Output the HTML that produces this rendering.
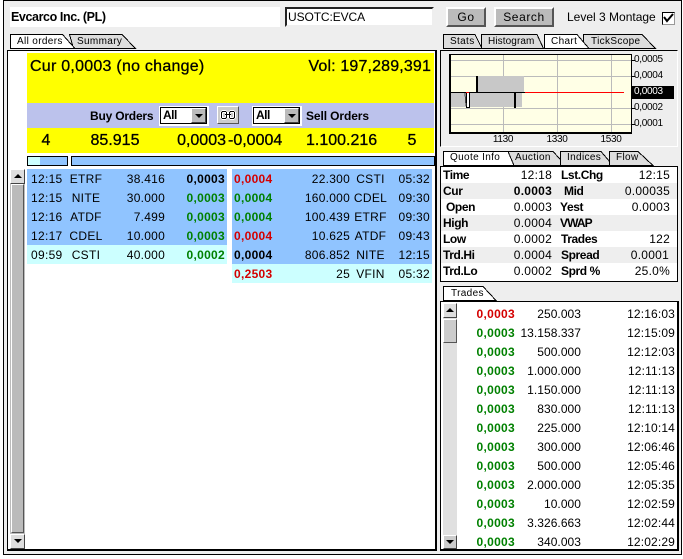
<!DOCTYPE html>
<html><head><meta charset="utf-8"><style>
html,body{margin:0;padding:0;background:#fff}
#r{position:relative;width:683px;height:559px;overflow:hidden;background:#fff;font:12px/16px "Liberation Sans",sans-serif;color:#000}
#r div,#r span{position:absolute;white-space:nowrap}
.b{font-weight:bold}.g{color:#008000}.d{color:#d40000}
.t{letter-spacing:.3px}
.rt{text-align:right}.c{text-align:center}
.btn{background:#bbb;border:2px solid;border-color:#fff #555 #555 #fff;box-sizing:border-box;text-align:center;font-size:12px;letter-spacing:.6px}
.tab{font-size:10px;letter-spacing:.35px;line-height:14px}
.up{background:#ddd;border:1px solid;border-color:#fff #444 #444 #fff;box-sizing:border-box}
.sel{background:#fff;box-sizing:border-box;border:1px solid #fff}
.q{font-weight:bold;font-size:12px;letter-spacing:-.4px}
.v{text-align:right;letter-spacing:.25px}
.vt{text-align:right;letter-spacing:.05px}
.tm{text-align:right;letter-spacing:.15px}
.lb{font-size:10px;letter-spacing:-.3px}
.big{font-size:16px;line-height:20px;-webkit-text-stroke:.3px #000}
</style></head><body><div id="r">
<div style="left:3px;top:0;width:679px;height:555px;box-sizing:border-box;border:1px solid #000;background:#eee"></div>

<div style="left:10px;top:7px;width:270px;height:20px;background:#fff"></div>
<div class="b" style="left:11px;top:9px;font-size:12.500px;letter-spacing:-.4px">Evcarco Inc. (PL)</div>
<div style="left:285px;top:7px;width:149px;height:20px;box-sizing:border-box;background:#fff;border:2px solid;border-color:#222 #eee #eee #222"></div>
<div style="left:288px;top:9px;letter-spacing:-.1px">USOTC:EVCA</div>
<div class="btn" style="left:446px;top:7px;width:40px;height:20px;line-height:16px">Go</div>
<div class="btn" style="left:494px;top:7px;width:60px;height:20px;line-height:16px">Search</div>
<div style="left:567px;top:9px">Level 3 Montage</div>
<div style="left:662px;top:12px;width:13px;height:13px;box-sizing:border-box;background:#fff;border:1px solid #000;border-right-color:#999;border-bottom-color:#999"></div>

<svg style="position:absolute;left:0;top:0" width="683" height="559">
<g stroke="#000" stroke-width="1" fill="#ddd" shape-rendering="crispEdges">
<path d="M73.500 48.500L69.500 34.500H122L135.500 48.500Z"/>
<path d="M10.500 48.500V34.500H62.500L75 48.500Z" fill="#fff"/>
<path d="M443.500 48.500V34.500H475L482 48.500Z"/>
<path d="M481.500 48.500V34.500H537L543.500 48.500Z"/>
<path d="M583.500 48.500V34.500H642L655.500 48.500Z"/>
<path d="M544.500 48.500V34.500H577L589 48.500Z" fill="#fff"/>
<path d="M508.500 165.500V151.500H553L566 165.500Z"/>
<path d="M560.500 165.500V151.500H601L613 165.500Z"/>
<path d="M609.500 165.500V151.500H638L653 165.500Z"/>
<path d="M443.500 165.500V151.500H508L514 165.500Z" fill="#fff"/>
<path d="M443.500 300.500V286.500H483L496 300.500Z" fill="#fff"/>
</g>
<path d="M664 17l3 4 6-7" fill="none" stroke="#000" stroke-width="2"/>
</svg>
<div class="tab" style="left:17px;top:35px">All orders</div>
<div class="tab" style="left:77px;top:35px">Summary</div>
<div class="tab" style="left:450px;top:35px">Stats</div>
<div class="tab" style="left:488px;top:35px;letter-spacing:.1px">Histogram</div>
<div class="tab" style="left:551px;top:35px">Chart</div>
<div class="tab" style="left:591px;top:35px">TickScope</div>
<div class="tab" style="left:450px;top:151px">Quote Info</div>
<div class="tab" style="left:515px;top:151px">Auction</div>
<div class="tab" style="left:567px;top:151px">Indices</div>
<div class="tab" style="left:616px;top:151px">Flow</div>
<div class="tab" style="left:451px;top:287px">Trades</div>

<!-- main panel -->
<div style="left:7px;top:50px;width:430px;height:501px;box-sizing:border-box;border:1px solid #000;background:#fff;border-width:1px 2px 2px 1px"></div>
<div style="left:27px;top:53px;width:407px;height:50px;background:#ff0"></div>
<div style="left:27px;top:103px;width:407px;height:25px;background:#bcc2ec"></div>
<div style="left:27px;top:128px;width:407px;height:25px;background:#ff0"></div>
<div class="big" style="left:30px;top:57px;letter-spacing:.25px">Cur 0,0003 (no change)</div>
<div class="rt big" style="left:231px;width:200px;top:57px;letter-spacing:.15px">Vol: 197,289,391</div>
<div class="b" style="left:90px;top:108px;letter-spacing:-.2px">Buy Orders</div>
<div class="b" style="left:306px;top:108px;letter-spacing:-.1px">Sell Orders</div>
<div style="left:159px;top:106px;width:50px;height:20px;background:#fff"></div>
<div style="left:160px;top:107px;width:47px;height:17px;border:1px solid #000;box-sizing:border-box;background:#fff"></div>
<div class="b" style="left:163px;top:108px;line-height:15px;letter-spacing:-.5px">All</div>
<div style="left:191px;top:108px;width:15px;height:15px;background:#bbb;box-sizing:border-box;border:1px solid;border-color:#fff #444 #444 #fff"></div>
<div style="left:195px;top:114px;width:0;height:0;border:4px solid transparent;border-top:4px solid #000;border-bottom:0"></div>
<div style="left:252px;top:106px;width:50px;height:20px;background:#fff"></div>
<div style="left:253px;top:107px;width:47px;height:17px;border:1px solid #000;box-sizing:border-box;background:#fff"></div>
<div class="b" style="left:256px;top:108px;line-height:15px;letter-spacing:-.5px">All</div>
<div style="left:284px;top:108px;width:15px;height:15px;background:#bbb;box-sizing:border-box;border:1px solid;border-color:#fff #444 #444 #fff"></div>
<div style="left:288px;top:114px;width:0;height:0;border:4px solid transparent;border-top:4px solid #000;border-bottom:0"></div>
<div style="left:217px;top:106px;width:22px;height:18px;box-sizing:border-box;background:#ccc;border:1px solid;border-color:#fff #555 #555 #fff"></div>
<svg style="position:absolute;left:217px;top:106px" width="22" height="18"><g fill="none" shape-rendering="crispEdges"><g stroke="#fff" stroke-width="3"><rect x="4.500" y="5.500" width="5" height="7" rx="2"/><rect x="12.500" y="5.500" width="5" height="7" rx="2"/></g><g stroke="#000" stroke-width="1"><rect x="4.500" y="5.500" width="5" height="7" rx="1.500"/><rect x="12.500" y="5.500" width="5" height="7" rx="1.500"/><path d="M8 8.500H14"/></g></g></svg>

<div class="c big" style="left:27px;width:38px;top:131px">4</div>
<div class="c big" style="left:90px;width:50px;top:131px">85.915</div>
<div class="rt big" style="left:150px;width:76px;top:131px">0,0003</div>
<div class="big" style="left:228px;top:131px">-0,0004</div>
<div class="big" style="left:306px;top:131px">1.100.216</div>
<div class="c big" style="left:400px;width:24px;top:131px">5</div>

<div style="left:27px;top:156px;width:41px;height:10px;box-sizing:border-box;border:1px solid #000;background:linear-gradient(90deg,#cff 0 12px,#90c4ff 12px)"></div>
<div style="left:71px;top:156px;width:364px;height:10px;box-sizing:border-box;border:1px solid #000;background:#90c4ff"></div>

<!-- main scrollbar -->
<div style="left:10px;top:169px;width:15px;height:380px;background:#bbb"></div>
<div class="up" style="left:10px;top:169px;width:15px;height:15px"></div>
<div style="left:14px;top:174px;width:0;height:0;border:4px solid transparent;border-bottom:4px solid #000;border-top:0"></div>
<div style="left:11px;top:184px;width:13px;height:349px;background:#bbb;box-sizing:border-box;border:1px solid;border-color:#fff #555 #555 #fff"></div>
<div class="up" style="left:10px;top:534px;width:15px;height:15px"></div>
<div style="left:14px;top:539px;width:0;height:0;border:4px solid transparent;border-top:4px solid #000;border-bottom:0"></div>

<!-- order rows -->
<div style="left:27px;top:169px;width:200px;height:76px;background:#90c4ff"></div>
<div style="left:27px;top:245px;width:200px;height:19px;background:#cff"></div>
<div style="left:232px;top:169px;width:200px;height:95px;background:#90c4ff"></div>
<div style="left:232px;top:264px;width:200px;height:19px;background:#cff"></div>

<div class="t" style="left:31px;top:171px">12:15</div><div class="c t" style="left:66px;width:40px;top:171px">ETRF</div><div class="v" style="left:105px;width:60px;top:171px">38.416</div><div class="rt b t" style="left:165px;width:60px;top:171px">0,0003</div>
<div class="t" style="left:31px;top:190px">12:15</div><div class="c t" style="left:66px;width:40px;top:190px">NITE</div><div class="v" style="left:105px;width:60px;top:190px">30.000</div><div class="rt b t g" style="left:165px;width:60px;top:190px">0,0003</div>
<div class="t" style="left:31px;top:209px">12:16</div><div class="c t" style="left:66px;width:40px;top:209px">ATDF</div><div class="v" style="left:105px;width:60px;top:209px">7.499</div><div class="rt b t g" style="left:165px;width:60px;top:209px">0,0003</div>
<div class="t" style="left:31px;top:228px">12:17</div><div class="c t" style="left:66px;width:40px;top:228px">CDEL</div><div class="v" style="left:105px;width:60px;top:228px">10.000</div><div class="rt b t g" style="left:165px;width:60px;top:228px">0,0003</div>
<div class="t" style="left:31px;top:247px">09:59</div><div class="c t" style="left:66px;width:40px;top:247px">CSTI</div><div class="v" style="left:105px;width:60px;top:247px">40.000</div><div class="rt b t g" style="left:165px;width:60px;top:247px">0,0002</div>

<div class="b t d" style="left:234px;top:171px">0,0004</div><div class="v" style="left:280px;width:70px;top:171px">22.300</div><div class="c t" style="left:350px;width:41px;top:171px">CSTI</div><div class="t rt" style="left:390px;width:40px;top:171px">05:32</div>
<div class="b t g" style="left:234px;top:190px">0,0004</div><div class="v" style="left:280px;width:70px;top:190px">160.000</div><div class="c t" style="left:350px;width:41px;top:190px">CDEL</div><div class="t rt" style="left:390px;width:40px;top:190px">09:30</div>
<div class="b t g" style="left:234px;top:209px">0,0004</div><div class="v" style="left:280px;width:70px;top:209px">100.439</div><div class="c t" style="left:350px;width:41px;top:209px">ETRF</div><div class="t rt" style="left:390px;width:40px;top:209px">09:30</div>
<div class="b t d" style="left:234px;top:228px">0,0004</div><div class="v" style="left:280px;width:70px;top:228px">10.625</div><div class="c t" style="left:350px;width:41px;top:228px">ATDF</div><div class="t rt" style="left:390px;width:40px;top:228px">09:43</div>
<div class="b t" style="left:234px;top:247px">0,0004</div><div class="v" style="left:280px;width:70px;top:247px">806.852</div><div class="c t" style="left:350px;width:41px;top:247px">NITE</div><div class="t rt" style="left:390px;width:40px;top:247px">12:15</div>
<div class="b t d" style="left:234px;top:266px">0,2503</div><div class="v" style="left:280px;width:70px;top:266px">25</div><div class="c t" style="left:350px;width:41px;top:266px">VFIN</div><div class="t rt" style="left:390px;width:40px;top:266px">05:32</div>

<!-- chart panel -->
<div style="left:440px;top:50px;width:238px;height:97px;box-sizing:border-box;border:1px solid #000;border-bottom-color:#fff;border-right-color:#fff;background:#eee"></div>
<svg style="position:absolute;left:440px;top:50px" width="240" height="90" shape-rendering="crispEdges">
<rect x="9" y="4" width="183" height="80" fill="#000"/>
<rect x="11" y="5" width="180" height="77" fill="#ffffe6"/>
<g stroke="#bbb"><path d="M11 10.500H191M11 26.500H191M11 58.500H191M11 74.500H191M63.500 5V82M117.500 5V82M171.500 5V82"/></g>
<rect x="37" y="26" width="47" height="16" fill="#c8c8c8"/>
<rect x="11" y="43" width="71" height="14" fill="#c8c8c8"/>
<rect x="36" y="26" width="2" height="16" fill="#000"/>
<rect x="74" y="42" width="2" height="16" fill="#000"/>
<rect x="27" y="43" width="2" height="15" fill="#fff"/>
<path d="M26.500 43V58M29.500 43V58M26 57.500H30" stroke="#000"/>
<path d="M25 43l1 13" stroke="#444"/>
<path d="M11 42.500H85" stroke="#000"/>
<path d="M85 42.500H184" stroke="#f00"/>
<path d="M26 42.500H29" stroke="#f00"/>
<path d="M192 10.500H195M192 26.500H195M192 58.500H195M192 74.500H195" stroke="#000"/>
</svg>
<div style="left:631px;top:86px;width:43px;height:13px;background:#000"></div>
<div class="lb" style="left:634px;top:52px">0,0005</div>
<div class="lb" style="left:634px;top:68px">0,0004</div>
<div class="lb" style="left:634px;top:84px;color:#fff">0,0003</div>
<div class="lb" style="left:634px;top:100px">0,0002</div>
<div class="lb" style="left:634px;top:116px">0,0001</div>
<div class="c lb" style="left:483px;width:40px;top:132px">1130</div>
<div class="c lb" style="left:537px;width:40px;top:132px">1330</div>
<div class="c lb" style="left:591px;width:40px;top:132px">1530</div>

<!-- quote panel -->
<div style="left:440px;top:166px;width:238px;height:116px;box-sizing:border-box;border:1px solid #000;background:#fff"></div>
<div style="left:441px;top:183px;width:236px;height:16px;background:#eee"></div>
<div style="left:441px;top:215px;width:236px;height:16px;background:#eee"></div>
<div style="left:441px;top:247px;width:236px;height:16px;background:#eee"></div>

<div class="q" style="left:443px;top:167px">Time</div><div class="v" style="left:492px;width:60px;top:167px">12:18</div><div class="q" style="left:561px;top:167px">Lst.Chg</div><div class="v" style="left:610px;width:60px;top:167px">12:15</div>
<div class="q" style="left:443px;top:183px">Cur</div><div class="v b" style="left:492px;width:60px;top:183px">0.0003</div><div class="q" style="left:564px;top:183px">Mid</div><div class="v" style="left:610px;width:60px;top:183px">0.00035</div>
<div class="q" style="left:446px;top:199px">Open</div><div class="v" style="left:492px;width:60px;top:199px">0.0003</div><div class="q" style="left:560px;top:199px">Yest</div><div class="v" style="left:610px;width:60px;top:199px">0.0003</div>
<div class="q" style="left:443px;top:215px">High</div><div class="v" style="left:492px;width:60px;top:215px">0.0004</div><div class="q" style="left:560px;top:215px;letter-spacing:-.9px">VWAP</div>
<div class="q" style="left:443px;top:231px">Low</div><div class="v" style="left:492px;width:60px;top:231px">0.0002</div><div class="q" style="left:561px;top:231px">Trades</div><div class="v" style="left:610px;width:60px;top:231px">122</div>
<div class="q" style="left:443px;top:247px">Trd.Hi</div><div class="v" style="left:492px;width:60px;top:247px">0.0004</div><div class="q" style="left:561px;top:247px">Spread</div><div class="v" style="left:610px;width:59px;top:247px">0.0001</div>
<div class="q" style="left:443px;top:263px">Trd.Lo</div><div class="v" style="left:492px;width:60px;top:263px">0.0002</div><div class="q" style="left:561px;top:263px">Sprd %</div><div class="v" style="left:610px;width:60px;top:263px">25.0%</div>

<!-- trades panel -->
<div style="left:440px;top:301px;width:239px;height:250px;box-sizing:border-box;border:1px solid #000;border-width:1px 2px 2px 1px;background:#fff"></div>
<div style="left:443px;top:303px;width:14px;height:246px;background:#e0e0e0"></div>
<div class="up" style="left:443px;top:303px;width:14px;height:15px"></div>
<div style="left:446px;top:308px;width:0;height:0;border:4px solid transparent;border-bottom:4px solid #000;border-top:0"></div>
<div style="left:443px;top:319px;width:14px;height:24px;background:#ccc;box-sizing:border-box;border:1px solid;border-color:#fff #555 #555 #fff"></div>
<div class="up" style="left:443px;top:535px;width:14px;height:14px;background:#ccc"></div>
<div style="left:446px;top:540px;width:0;height:0;border:4px solid transparent;border-top:4px solid #000;border-bottom:0"></div>

<div class="rt b t d" style="left:450px;width:65px;top:306px">0,0003</div><div class="vt" style="left:510px;width:71px;top:306px">250.003</div><div class="tm" style="left:610px;width:65px;top:306px">12:16:03</div>
<div class="rt b t g" style="left:450px;width:65px;top:325px">0,0003</div><div class="vt" style="left:510px;width:71px;top:325px">13.158.337</div><div class="tm" style="left:610px;width:65px;top:325px">12:15:09</div>
<div class="rt b t g" style="left:450px;width:65px;top:344px">0,0003</div><div class="vt" style="left:510px;width:71px;top:344px">500.000</div><div class="tm" style="left:610px;width:65px;top:344px">12:12:03</div>
<div class="rt b t g" style="left:450px;width:65px;top:363px">0,0003</div><div class="vt" style="left:510px;width:71px;top:363px">1.000.000</div><div class="tm" style="left:610px;width:65px;top:363px">12:11:13</div>
<div class="rt b t g" style="left:450px;width:65px;top:382px">0,0003</div><div class="vt" style="left:510px;width:71px;top:382px">1.150.000</div><div class="tm" style="left:610px;width:65px;top:382px">12:11:13</div>
<div class="rt b t g" style="left:450px;width:65px;top:401px">0,0003</div><div class="vt" style="left:510px;width:71px;top:401px">830.000</div><div class="tm" style="left:610px;width:65px;top:401px">12:11:13</div>
<div class="rt b t g" style="left:450px;width:65px;top:420px">0,0003</div><div class="vt" style="left:510px;width:71px;top:420px">225.000</div><div class="tm" style="left:610px;width:65px;top:420px">12:10:14</div>
<div class="rt b t g" style="left:450px;width:65px;top:439px">0,0003</div><div class="vt" style="left:510px;width:71px;top:439px">300.000</div><div class="tm" style="left:610px;width:65px;top:439px">12:06:46</div>
<div class="rt b t g" style="left:450px;width:65px;top:458px">0,0003</div><div class="vt" style="left:510px;width:71px;top:458px">500.000</div><div class="tm" style="left:610px;width:65px;top:458px">12:05:46</div>
<div class="rt b t g" style="left:450px;width:65px;top:477px">0,0003</div><div class="vt" style="left:510px;width:71px;top:477px">2.000.000</div><div class="tm" style="left:610px;width:65px;top:477px">12:05:35</div>
<div class="rt b t g" style="left:450px;width:65px;top:496px">0,0003</div><div class="vt" style="left:510px;width:71px;top:496px">10.000</div><div class="tm" style="left:610px;width:65px;top:496px">12:02:59</div>
<div class="rt b t g" style="left:450px;width:65px;top:515px">0,0003</div><div class="vt" style="left:510px;width:71px;top:515px">3.326.663</div><div class="tm" style="left:610px;width:65px;top:515px">12:02:44</div>
<div class="rt b t g" style="left:450px;width:65px;top:534px">0,0003</div><div class="vt" style="left:510px;width:71px;top:534px">340.003</div><div class="tm" style="left:610px;width:65px;top:534px">12:02:29</div>
</div></body></html>
